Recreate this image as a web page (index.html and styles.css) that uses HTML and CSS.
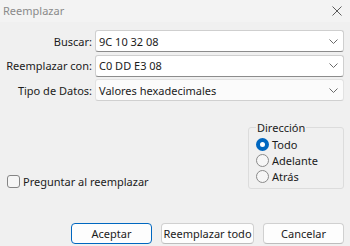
FILE: index.html
```html
<!DOCTYPE html>
<html>
<head>
  <title>Reemplazar</title>
  <link rel="stylesheet" href="styles.css">
</head>
<body>
  <div class="dialog">
    <div class="titlebar">
      <span class="title">Reemplazar</span>
      <svg class="close" width="10" height="10" viewBox="0 0 10 10">
        <path d="M0.5 0.5 L9.5 9.5 M9.5 0.5 L0.5 9.5" stroke="#5c5c5c" stroke-width="1" fill="none"/>
      </svg>
    </div>

    <div class="form">
      <label class="label">Buscar:</label>
      <div class="combo">
        <span class="combo-text">9C 10 32 08</span>
        <svg class="chevron" width="9" height="5" viewBox="0 0 9 5"><path d="M0.5 0.5 L4.5 4.5 L8.5 0.5" stroke="#6a6a6a" fill="none"/></svg>
      </div>
      <label class="label">Reemplazar con:</label>
      <div class="combo">
        <span class="combo-text">C0 DD E3 08</span>
        <svg class="chevron" width="9" height="5" viewBox="0 0 9 5"><path d="M0.5 0.5 L4.5 4.5 L8.5 0.5" stroke="#6a6a6a" fill="none"/></svg>
      </div>
      <label class="label">Tipo de Datos:</label>
      <div class="combo select">
        <span class="combo-text">Valores hexadecimales</span>
        <svg class="chevron" width="9" height="5" viewBox="0 0 9 5"><path d="M0.5 0.5 L4.5 4.5 L8.5 0.5" stroke="#6a6a6a" fill="none"/></svg>
      </div>
    </div>

    <div class="middle">
      <div class="check-row">
        <span class="checkbox"></span>
        <span>Preguntar al reemplazar</span>
      </div>
      <fieldset class="direction">
        <legend>Dirección</legend>
        <div class="radio-row"><span class="radio checked"></span><span>Todo</span></div>
        <div class="radio-row"><span class="radio"></span><span>Adelante</span></div>
        <div class="radio-row"><span class="radio"></span><span>Atrás</span></div>
      </fieldset>
    </div>

    <div class="buttons">
      <button class="btn default">Aceptar</button>
      <button class="btn wide">Reemplazar todo</button>
      <button class="btn">Cancelar</button>
    </div>
  </div>
</body>
</html>
```

FILE: styles.css
```css
body {
  margin: 0;
  background-color: #f0f0f0;
  font-family: "Noto Sans", "Open Sans", sans-serif;
  font-size: 11px;
  line-height: 15px;
  color: #1b1b1b;
  white-space: nowrap;
}

.dialog {
  width: 350px;
  height: 246px;
  overflow: hidden;
}

.titlebar {
  height: 22px;
  box-sizing: border-box;
  background-color: #f3f3f3;
  display: flex;
  align-items: center;
  justify-content: space-between;
  padding: 0 8px 2px 3px;
}

.title {
  color: #8a8a8a;
}

.close {
  display: block;
  margin-top: 1px;
}

.form {
  display: grid;
  grid-template-columns: 92px 1fr;
  grid-auto-rows: 22px;
  column-gap: 3px;
  row-gap: 2.5px;
  padding: 8px 6px 0 0;
}

.label {
  justify-self: end;
  align-self: center;
}

.combo {
  height: 22px;
  box-sizing: border-box;
  background-color: #fff;
  border: 1px solid #cfcfcf;
  border-bottom-color: #8c8c8c;
  border-radius: 3px;
  display: flex;
  align-items: center;
  padding: 0 5px 0 3px;
}

.combo.select {
  background-color: #fbfbfb;
  border-color: #e2e2e2;
  border-bottom-color: #d0d0d0;
}

.combo-text {
  flex: 1;
}

.chevron {
  display: block;
}

.middle {
  display: flex;
  justify-content: space-between;
  align-items: flex-end;
  padding: 0 6px 0 7px;
  margin-top: 19px;
}

.check-row {
  display: flex;
  align-items: center;
  gap: 3px;
  margin-bottom: 0;
}

.checkbox {
  width: 13px;
  height: 13px;
  box-sizing: border-box;
  border: 1px solid #858585;
  border-radius: 3px;
  background-color: #f6f6f6;
}

.direction {
  width: 96px;
  box-sizing: border-box;
  margin: 0;
  padding: 1px 6px 4px 7px;
  border: 1px solid #dcdcdc;
  border-radius: 3px;
}

.direction legend {
  padding: 0 1px;
}

.radio-row {
  display: flex;
  align-items: center;
  gap: 3px;
  height: 16px;
}

.radio {
  width: 13px;
  height: 13px;
  box-sizing: border-box;
  border: 1px solid #8a8a8a;
  border-radius: 50%;
  background-color: #f6f6f6;
}

.radio.checked {
  border: 4px solid #0067c0;
  background-color: #fff;
}

.buttons {
  display: flex;
  justify-content: flex-end;
  gap: 9px;
  padding-right: 6px;
  margin-top: 34px;
}

.btn {
  width: 81px;
  height: 21px;
  box-sizing: border-box;
  font-family: inherit;
  font-size: 11px;
  line-height: 15px;
  color: #1b1b1b;
  background-color: #fdfdfd;
  border: 1px solid #d0d0d0;
  border-bottom-color: #bdbdbd;
  border-radius: 4px;
  padding: 0;
}

.btn.wide {
  width: 93px;
}

.btn.default {
  border: 1.5px solid #0067c0;
}
```
